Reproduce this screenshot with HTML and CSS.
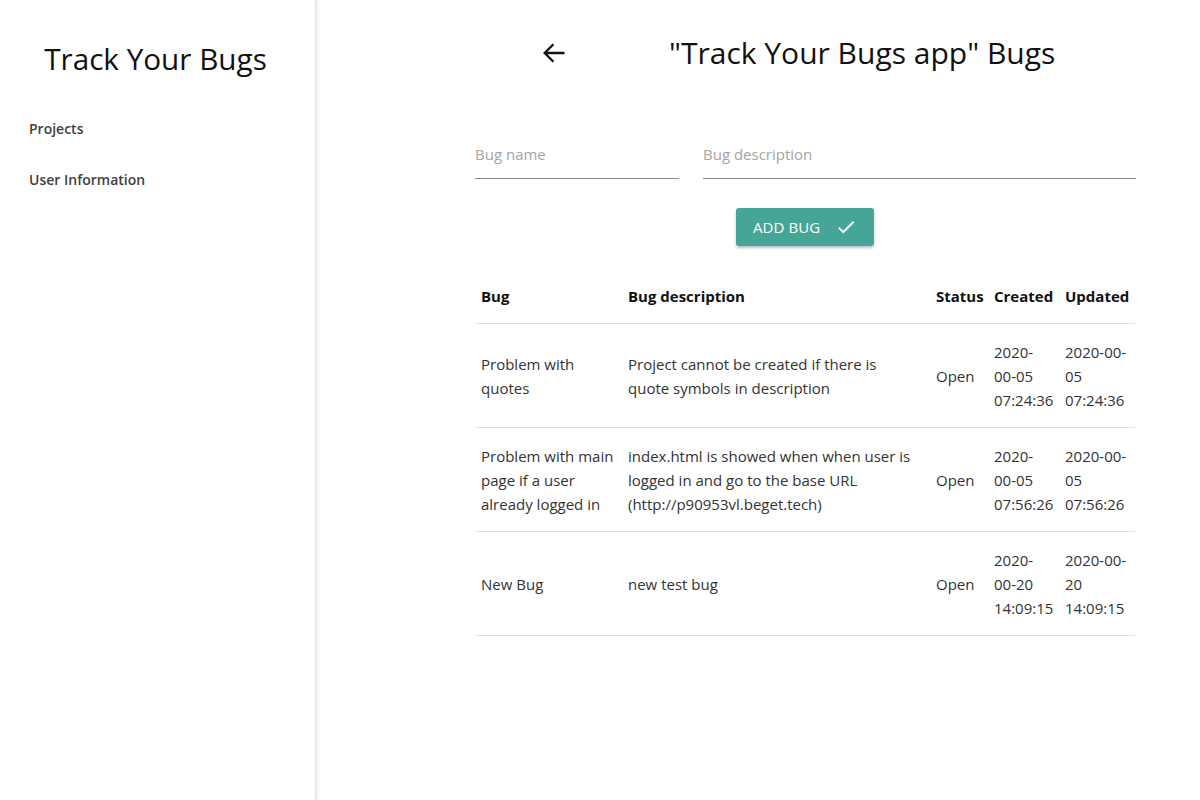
FILE: index.html
```html
<!DOCTYPE html>
<html lang="en">
<head>
<meta charset="utf-8">
<title>Track Your Bugs</title>
<link rel="stylesheet" href="styles.css">
</head>
<body>
<div class="app">
  <aside class="sidebar">
    <h1 class="brand">Track Your Bugs</h1>
    <nav class="nav">
      <a class="nav-item" href="#">Projects</a>
      <a class="nav-item" href="#">User Information</a>
    </nav>
  </aside>
  <main class="main">
    <div class="content">
      <header class="page-head">
        <button class="back" aria-label="Back">
          <svg width="24" height="24" viewBox="0 0 24 24"><path d="M21 12H4.5M11.5 4.5L4 12l7.5 7.5" fill="none" stroke="#111" stroke-width="2"/></svg>
        </button>
        <h2 class="page-title">"Track Your Bugs app" Bugs</h2>
      </header>
      <form class="bug-form">
        <div class="fields">
          <label class="field field-name"><input type="text" placeholder="Bug name"></label>
          <label class="field field-desc"><input type="text" placeholder="Bug description"></label>
        </div>
        <button type="button" class="add-btn">ADD BUG
          <svg width="22" height="22" viewBox="0 0 24 24"><path d="M9 16.17L4.83 12l-1.42 1.41L9 19 21 7l-1.41-1.41z" fill="#fff"/></svg>
        </button>
      </form>
      <table class="bugs">
        <colgroup>
          <col class="c-bug"><col class="c-desc"><col class="c-status"><col class="c-created"><col class="c-updated">
        </colgroup>
        <thead>
          <tr><th>Bug</th><th>Bug description</th><th>Status</th><th>Created</th><th>Updated</th></tr>
        </thead>
        <tbody>
          <tr><td>Problem with quotes</td><td class="desc">Project cannot be created if there is quote symbols in description</td><td>Open</td><td>2020-00-05 07:24:36</td><td>2020-00-05 07:24:36</td></tr>
          <tr><td>Problem with main page if a user already logged in</td><td class="desc">index.html is showed when when user is logged in and go to the base URL (http://p90953vl.beget.tech)</td><td>Open</td><td>2020-00-05 07:56:26</td><td>2020-00-05 07:56:26</td></tr>
          <tr><td>New Bug</td><td class="desc">new test bug</td><td>Open</td><td>2020-00-20 14:09:15</td><td>2020-00-20 14:09:15</td></tr>
        </tbody>
      </table>
    </div>
  </main>
</div>
</body>
</html>
```
FILE: styles.css
```css
* { box-sizing: border-box; }
html, body { margin: 0; padding: 0; }
body {
  font-family: "Open Sans", "Noto Sans", sans-serif;
  color: #222;
  background: #fff;
}
.app {
  display: flex;
  height: 100vh;
}
.sidebar {
  width: 316px;
  flex: none;
  border-right: 1px solid #e2e2e2;
  box-shadow: 1px 0 4px rgba(0,0,0,0.12);
  background: #fff;
  position: relative;
  z-index: 1;
}
.brand {
  margin: 37px 0 0;
  font-size: 29.7px;
  font-weight: 400;
  line-height: 44px;
  text-align: center;
  color: #111;
  padding-right: 4px;
}
.nav {
  display: flex;
  flex-direction: column;
  margin-top: 35px;
}
.nav-item {
  display: block;
  padding: 0 29px;
  height: 51px;
  line-height: 26px;
  font-size: 14px;
  font-weight: 600;
  color: #404040;
  text-decoration: none;
}
.main {
  flex: 1;
  background: #fff;
}
.content {
  width: 660px;
  margin-left: 159px;
}
.page-head {
  display: flex;
  align-items: center;
  height: 42px;
  margin-top: 32px;
  padding-left: 65px;
}
.back {
  border: 0;
  background: none;
  padding: 0;
  width: 28px;
  height: 28px;
  display: flex;
  align-items: center;
  justify-content: center;
  cursor: pointer;
}
.back svg { width: 28px; height: 28px; }
.page-title {
  margin: 0 0 0 101px;
  font-size: 30px;
  font-weight: 400;
  color: #111;
  line-height: 42px;
}
.bug-form {
  display: flex;
  flex-direction: column;
  align-items: center;
  margin-top: 66px;
}
.fields {
  display: flex;
  gap: 24px;
  width: 100%;
}
.field {
  display: block;
  border-bottom: 1px solid #8c8c8c;
  height: 39px;
}
.field-name { width: 204px; }
.field-desc { flex: 1; margin-right: -1px; }
.field input {
  border: 0;
  outline: none;
  width: 100%;
  font: inherit;
  font-size: 15px;
  padding: 4px 0;
  color: #222;
  background: transparent;
}
.field input::placeholder { color: #a4a4a4; }
.add-btn {
  margin-top: 29px;
  height: 38px;
  width: 138px;
  display: flex;
  align-items: center;
  padding: 0 0 0 17px;
  gap: 15px;
  background: #45a596;
  color: #fff;
  border: 0;
  border-radius: 3px;
  font: inherit;
  font-size: 15px;
  letter-spacing: 0.1px;
  box-shadow: 0 2px 3px rgba(0,0,0,0.25);
  cursor: pointer;
}
.bugs {
  width: 660px;
  margin-top: 22px;
  border-collapse: collapse;
  table-layout: fixed;
  font-size: 15px;
}
.c-bug { width: 147px; }
.c-desc { width: 308px; }
.c-status { width: 58px; }
.c-created { width: 71px; }
.c-updated { width: 76px; }
.bugs th, .bugs td {
  text-align: left;
  padding: 16px 6px 15px;
  line-height: 24px;
  border-bottom: 1px solid #e2e2e2;
  vertical-align: middle;
}
.bugs td.desc { padding-right: 16px; }
.bugs th {
  font-weight: 700;
  color: #111;
  white-space: nowrap;
}
.bugs td { color: #333; }
```
